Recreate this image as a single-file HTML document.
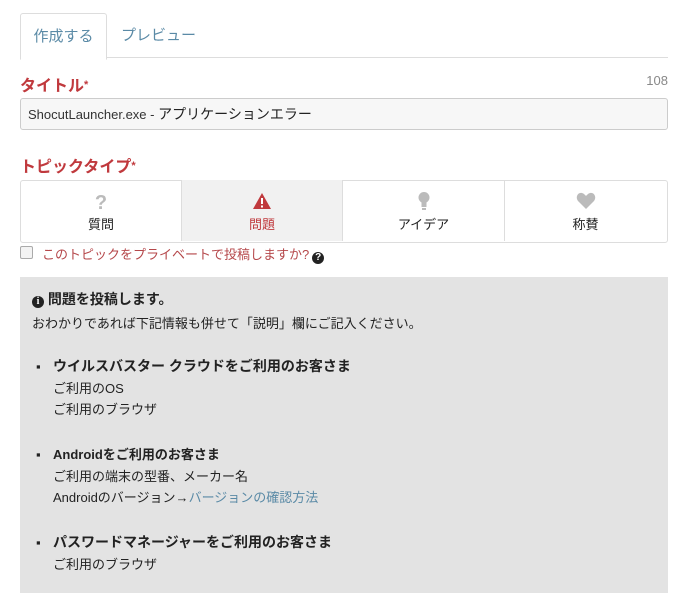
<!DOCTYPE html>
<html><head><meta charset="utf-8"><style>
body{margin:0;background:#fff;font-family:"Liberation Sans","Noto Sans CJK JP",sans-serif;color:#222;width:687px;height:607px;position:relative;overflow:hidden}
.a{position:absolute}
.tab{left:20px;top:13px;width:85px;height:45px;border:1px solid #ddd;border-bottom:1px solid #fff;border-radius:3px 3px 0 0;background:#fff;color:#5a8aa6;font-size:15px;line-height:45px;text-align:center;z-index:2}
.lbl{color:#c0393d;font-weight:bold;font-size:16px}
.st{font-size:11px;position:relative;top:-3px}
.btn{top:180px;height:61px;border-right:1px solid #ddd;text-align:center;font-size:13px}
.btn svg{display:block;margin:11px auto 3px;height:20px}
.gl{font-size:13px;line-height:21.5px}
</style></head><body>
<div class="a tab">作成する</div>
<div class="a" style="left:121px;top:13px;line-height:45px;font-size:15px;color:#5a8aa6">プレビュー</div>
<div class="a" style="left:20px;top:57px;width:648px;border-top:1px solid #ddd"></div>
<div class="a lbl" style="left:20px;top:72px">タイトル<span class="st">*</span></div>
<div class="a" style="right:19px;top:73px;font-size:13px;color:#888">108</div>
<div class="a" style="left:20px;top:98px;border:1px solid #ccc;border-radius:3px;background:#f7f7f7;font-size:14px;line-height:30px;padding-left:7px;box-sizing:border-box;width:648px;height:32px"><span style="font-size:13px;color:#333">ShocutLauncher.exe - </span>アプリケーションエラー</div>
<div class="a lbl" style="left:20px;top:153px">トピックタイプ<span class="st">*</span></div>
<div class="a" style="left:20px;top:180px;width:646px;height:61px;border:1px solid #ddd;border-radius:3px"></div>
<div class="a btn" style="left:21px;width:160px"><svg width="14" height="20" viewBox="0 0 14 20"><text x="7" y="18" text-anchor="middle" font-size="20" font-weight="bold" fill="#bbb" font-family="Liberation Sans">?</text></svg>質問</div>
<div class="a btn" style="left:182px;width:160px;background:#f1f1f1;color:#c0393d"><svg width="20" height="20" viewBox="0 0 20 20"><path d="M10 2L19 18H1Z" fill="#c0393d"/><rect x="9" y="7" width="2" height="6" fill="#fff"/><rect x="9" y="14.5" width="2" height="2" fill="#fff"/></svg>問題</div>
<div class="a btn" style="left:343px;width:161px"><svg width="14" height="20" viewBox="0 0 14 20"><circle cx="7" cy="6.5" r="5.5" fill="#bbb"/><rect x="4.5" y="10" width="5" height="6" fill="#bbb"/><rect x="5" y="17" width="4" height="2" fill="#bbb"/></svg>アイデア</div>
<div class="a btn" style="left:505px;width:161px;border-right:none"><svg width="20" height="20" viewBox="0 0 20 20"><path d="M10 18L2 10C-1 6 2 1 6 2C8 2.5 9 4 10 5C11 4 12 2.5 14 2C18 1 21 6 18 10Z" fill="#bbb"/></svg>称賛</div>
<div class="a" style="left:20px;top:246px;width:11px;height:11px;border:1px solid #aaa;border-radius:2px;background:#f3f3f3"></div>
<div class="a" style="left:42px;top:244px;font-size:13px;color:#b5474a">このトピックをプライベートで投稿しますか?<span style="display:inline-block;width:12px;height:12px;border-radius:50%;background:#222;color:#fff;font-size:10px;line-height:12px;text-align:center;font-weight:bold;vertical-align:-1px;margin-left:3px">?</span></div>
<div class="a" style="left:20px;top:277px;width:648px;height:316px;background:#e3e3e3"></div>
<div class="a" style="left:32px;top:289px;font-size:14px;font-weight:bold"><span style="display:inline-block;width:12px;height:12px;border-radius:50%;background:#222;color:#fff;font-size:10px;line-height:12px;text-align:center;font-family:'Liberation Serif';vertical-align:0">i</span> 問題を投稿します。</div>
<div class="a gl" style="left:32px;top:313px">おわかりであれば下記情報も併せて「説明」欄にご記入ください。</div>
<div class="a gl" style="left:32px;top:356px"><span style="position:absolute;left:4px;top:0">▪</span><div style="margin-left:21px"><b style="font-size:14px">ウイルスバスター クラウドをご利用のお客さま</b><br>ご利用のOS<br>ご利用のブラウザ</div></div>
<div class="a gl" style="left:32px;top:444px"><span style="position:absolute;left:4px;top:0">▪</span><div style="margin-left:21px"><b>Androidをご利用のお客さま</b><br>ご利用の端末の型番、メーカー名<br>Androidのバージョン→<span style="color:#5a8aa6">バージョンの確認方法</span></div></div>
<div class="a gl" style="left:32px;top:532px"><span style="position:absolute;left:4px;top:0">▪</span><div style="margin-left:21px"><b style="font-size:14px">パスワードマネージャーをご利用のお客さま</b><br>ご利用のブラウザ</div></div>
</body></html>
